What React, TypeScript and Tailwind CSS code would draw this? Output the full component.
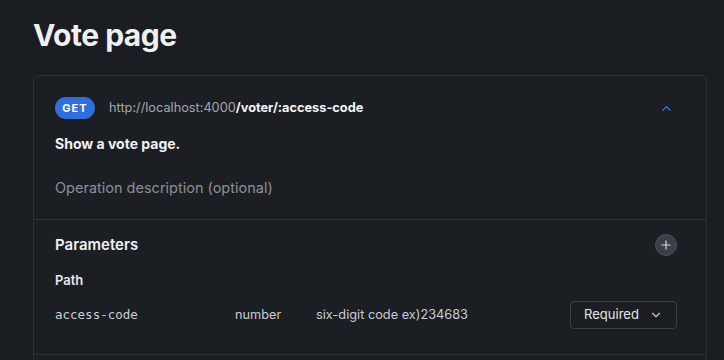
import React from 'react';
import { ChevronUp, ChevronDown, Plus } from 'lucide-react';

interface Param {
  name: string;
  type: string;
  description: string;
  required: boolean;
}

const params: Param[] = [
  { name: 'access-code', type: 'number', description: 'six-digit code ex)234683', required: true },
];

const App: React.FC = () => {
  return (
    <div className="min-h-[360px] h-[360px] overflow-hidden bg-[#1a1d21] pl-[33px] pr-[17px] font-['Inter',sans-serif]">
      <h1 className="pt-[15px] text-[30px] leading-[40px] font-bold text-[#eef0f3] tracking-[-0.5px]">
        Vote page
      </h1>

      <div className="mt-[20px] rounded-t-[6px] border border-[#2c3037] bg-[#1b1e22]">
        {/* operation header */}
        <div className="pl-[21px] pr-[29px] pt-[21px] pb-[19px]">
          <div className="flex items-center">
            <span className="flex h-[22px] w-[40px] items-center justify-center rounded-full bg-[#2f6fdc] text-[11px] font-bold tracking-[1px] text-white">
              GET
            </span>
            <span className="ml-[14px] text-[12.75px] text-[#a3a8b0]">
              http://localhost:4000
              <span className="font-bold text-[#f2f4f7]">/voter/:access-code</span>
            </span>
            <button className="ml-auto flex h-[22px] w-[22px] items-center justify-center text-[#3a7be6]">
              <ChevronUp size={15} strokeWidth={2.2} />
            </button>
          </div>
          <p className="mt-[15px] text-[14px] leading-[20px] font-bold text-[#f0f2f5]">
            Show a vote page.
          </p>
          <p className="mt-[22px] text-[14.5px] leading-[24px] text-[#8c9099]">
            Operation description (optional)
          </p>
        </div>

        {/* parameters */}
        <div className="border-t border-[#2c3037] pl-[21px] pr-[29px] pt-[14px] pb-[25px]">
          <div className="flex h-[22px] items-center justify-between">
            <h2 className="text-[15px] font-semibold text-[#eef0f3]">Parameters</h2>
            <button className="flex h-[22px] w-[22px] items-center justify-center rounded-full border border-[#4a505b] bg-[#3a3f49] text-[#d5d8de]">
              <Plus size={14} strokeWidth={2} />
            </button>
          </div>
          <h3 className="mt-[15px] text-[13px] leading-[18px] font-semibold text-[#e6e8ec]">Path</h3>

          {params.map((p, i) => (
            <div key={i} className="mt-[12px] flex h-[28px] items-center text-[12.75px] text-[#c9ccd2]">
              <span className="w-[180px] font-['DejaVu_Sans_Mono',monospace] text-[12.5px] text-[#cdd0d5]">
                {p.name}
              </span>
              <span className="w-[81px]">{p.type}</span>
              <span>{p.description}</span>
              <button className="ml-auto flex h-[28px] w-[107px] items-center justify-center gap-[10px] rounded-[4px] border border-[#3a3f48] text-[13px] text-[#e4e6ea]">
                {p.required ? 'Required' : 'Optional'}
                <ChevronDown size={14} strokeWidth={2} className="text-[#c4c7cd]" />
              </button>
            </div>
          ))}
        </div>

        <div className="border-t border-[#2c3037] h-[20px]" />
      </div>
    </div>
  );
};

export default App;
